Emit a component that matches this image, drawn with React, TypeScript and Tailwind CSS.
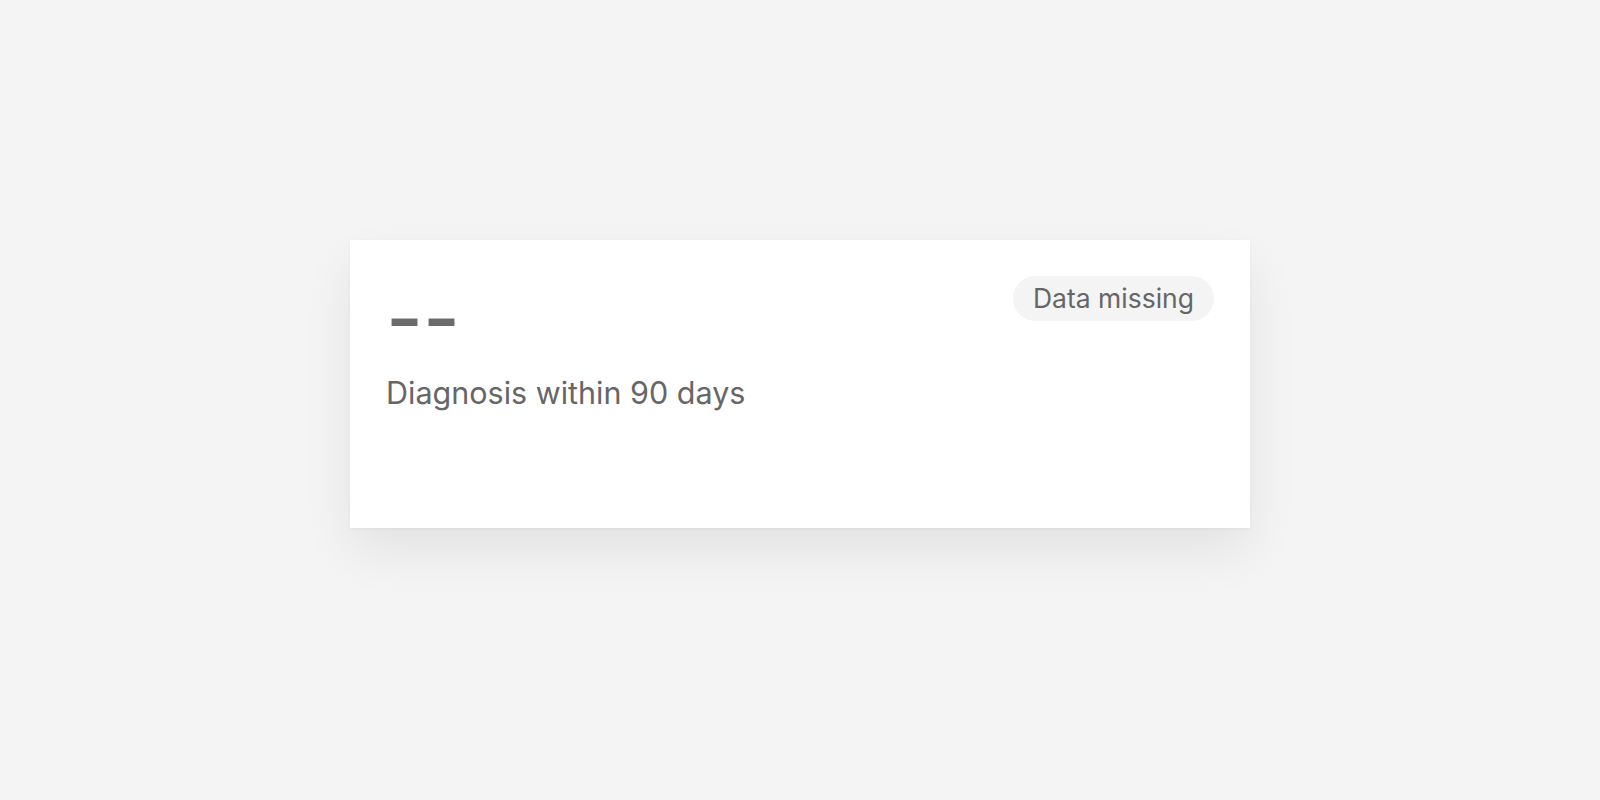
export default function App() {
  return (
    <div className="min-h-screen bg-[#f4f4f4] flex items-center justify-center pb-8 font-['Inter',sans-serif]">
      <div className="w-[900px] h-[288px] bg-white p-9 shadow-[0_1px_3px_rgba(0,0,0,0.05),0_24px_48px_rgba(0,0,0,0.07)]">
        <div className="flex items-start justify-between">
          <div className="pt-[2px] text-[80px] leading-none font-medium text-[#6b6b6b]">--</div>
          <span className="rounded-full bg-[#f4f4f4] px-5 h-[45px] flex items-center text-[26.5px] text-[#666666]">
            Data missing
          </span>
        </div>
        <p className="mt-[12px] text-[30.5px] text-[#666666]">Diagnosis within 90 days</p>
      </div>
    </div>
  );
}
